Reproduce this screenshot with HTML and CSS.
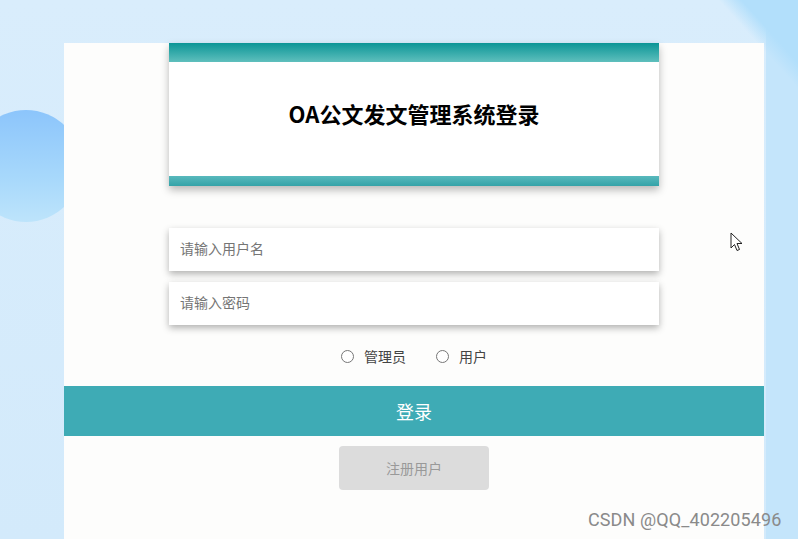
FILE: index.html
```html
<!DOCTYPE html>
<html lang="zh-CN">
<head>
    <meta charset="UTF-8">
    <title>OA公文发文管理系统登录</title>
    <link rel="stylesheet" href="styles.css">
</head>
<body>

<div class="bubble"></div>

<div class="panel">
    <!-- title card -->
    <div class="title-card">
        <div class="bar-top"></div>
        <h2>OA公文发文管理系统登录</h2>
        <div class="bar-bottom"></div>
    </div>

    <!-- login form -->
    <div class="form">
        <input type="text" class="field" placeholder="请输入用户名">
        <input type="password" class="field" placeholder="请输入密码">
        <div class="roles">
            <label><input type="radio" name="role"> 管理员</label>
            <label><input type="radio" name="role"> 用户</label>
        </div>
    </div>

    <button class="btn-login">登录</button>
    <button class="btn-register">注册用户</button>
</div>

<div class="watermark">CSDN @QQ_402205496</div>

<svg class="cursor" width="14" height="20" viewBox="0 0 14 20">
    <path d="M1 1 L1 16 L4.5 12.5 L7 18.5 L9.5 17.5 L7 11.5 L12 11.5 Z" fill="#fff" stroke="#222" stroke-width="1"/>
</svg>

</body>
</html>
```

FILE: styles.css
```css
html, body {
    margin: 0;
    height: 100%;
    overflow: hidden;
}

body {
    font-family: "Noto Sans CJK SC", "Noto Sans", sans-serif;
    background-color: #d5ebfb;
    background-image:
        linear-gradient(48deg, transparent 93.8%, #b2dffb 95.6%),
        linear-gradient(90deg, transparent 96%, #c4e5fb 96%),
        linear-gradient(180deg, #d9edfc 0%, #d3eafb 100%);
    position: relative;
}

.bubble {
    position: absolute;
    left: -30px;
    top: 110px;
    width: 112px;
    height: 112px;
    border-radius: 50%;
    background: linear-gradient(180deg, #8cc5fb 0%, #a7d8fb 60%, #bde4fb 100%);
}

.panel {
    position: relative;
    margin: 43px 0 0 64px;
    width: 700px;
    height: 520px;
    background-color: #fdfdfc;
    display: flex;
    flex-direction: column;
    align-items: center;
}

.title-card {
    width: 490px;
    height: 143px;
    background: #fff;
    box-shadow: 0 4px 8px rgba(0, 0, 0, 0.28);
    display: flex;
    flex-direction: column;
}

.bar-top {
    height: 19px;
    background: linear-gradient(180deg, #0b9596 0%, #5fbfbd 100%);
}

.bar-bottom {
    height: 10px;
    background: linear-gradient(180deg, #59b9bd 0%, #34a3a8 100%);
}

.title-card h2 {
    flex: 1;
    margin: 0;
    display: flex;
    align-items: center;
    justify-content: center;
    font-size: 22px;
    font-weight: bold;
    color: #000;
    padding-bottom: 12px;
}

.form {
    margin-top: 42px;
    width: 490px;
    display: flex;
    flex-direction: column;
    gap: 11px;
}

.field {
    box-sizing: border-box;
    width: 100%;
    height: 43px;
    border: none;
    outline: none;
    padding: 0 11px 3px;
    font-family: inherit;
    font-size: 14px;
    background: #fff;
    box-shadow: 0 3px 7px rgba(0, 0, 0, 0.3);
}

.field::placeholder {
    color: #757575;
}

.roles {
    display: flex;
    justify-content: center;
    gap: 30px;
    margin-top: 10px;
    font-size: 14px;
    color: #444;
}

.roles label {
    display: flex;
    align-items: center;
    height: 20px;
}

.roles input {
    margin: 0 10px 0 0;
    width: 13px;
    height: 13px;
}

.btn-login {
    margin-top: 20px;
    width: 100%;
    height: 50px;
    border: none;
    background-color: #3eabb5;
    color: #fff;
    font-family: inherit;
    font-size: 18px;
    cursor: pointer;
}

.btn-register {
    margin-top: 10px;
    width: 150px;
    height: 44px;
    border: none;
    border-radius: 4px;
    background-color: #dcdcdc;
    color: #999;
    font-family: inherit;
    font-size: 14px;
    cursor: pointer;
}

.watermark {
    position: absolute;
    left: 588px;
    top: 509px;
    font-family: "Roboto", "Liberation Sans", sans-serif;
    font-size: 18px;
    color: #8a8a8a;
    letter-spacing: 0.1px;
}

.cursor {
    position: absolute;
    left: 730px;
    top: 232px;
}
```
